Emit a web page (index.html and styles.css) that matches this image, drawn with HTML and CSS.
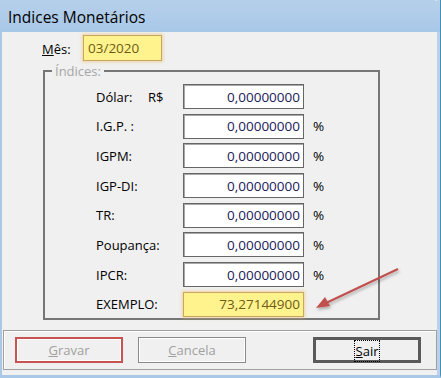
FILE: index.html
```html
<!DOCTYPE html>
<html lang="pt-BR">
<head>
  <meta charset="UTF-8">
  <title>Indices Monetários</title>
  <link rel="stylesheet" href="styles.css">
</head>
<body>

  <div class="window">
    <div class="titlebar">Indices Monetários</div>

    <div class="client">
      <div class="mes-row">
        <label class="mes-label"><u>M</u>ês:</label>
        <input class="field yellow mes" type="text" value="03/2020">
      </div>

      <fieldset class="group">
        <legend>Índices:</legend>

        <div class="row">
          <span class="lbl">Dólar:</span><span class="cur">R$</span>
          <input class="field num" type="text" value="0,00000000">
        </div>
        <div class="row">
          <span class="lbl wide">I.G.P. :</span>
          <input class="field num" type="text" value="0,00000000"><span class="pct">%</span>
        </div>
        <div class="row">
          <span class="lbl wide">IGPM:</span>
          <input class="field num" type="text" value="0,00000000"><span class="pct">%</span>
        </div>
        <div class="row">
          <span class="lbl wide">IGP-DI:</span>
          <input class="field num" type="text" value="0,00000000"><span class="pct">%</span>
        </div>
        <div class="row">
          <span class="lbl wide">TR:</span>
          <input class="field num" type="text" value="0,00000000"><span class="pct">%</span>
        </div>
        <div class="row">
          <span class="lbl wide">Poupança:</span>
          <input class="field num" type="text" value="0,00000000"><span class="pct">%</span>
        </div>
        <div class="row">
          <span class="lbl wide">IPCR:</span>
          <input class="field num" type="text" value="0,00000000"><span class="pct">%</span>
        </div>
        <div class="row">
          <span class="lbl wide">EXEMPLO:</span>
          <input class="field num yellow" type="text" value="73,27144900">
        </div>
      </fieldset>

      <div class="buttons">
        <button class="btn gravar" type="button"><u>G</u>ravar</button>
        <button class="btn cancela" type="button"><u>C</u>ancela</button>
        <button class="btn sair" type="button"><span class="focus"><u>S</u>air</span></button>
      </div>
    </div>

    <!-- seta vermelha de destaque -->
    <svg class="arrow" width="441" height="378" viewBox="0 0 441 378">
      <defs>
        <filter id="sh" x="-20%" y="-20%" width="140%" height="140%">
          <feDropShadow dx="1" dy="2" stdDeviation="1.5" flood-color="#000" flood-opacity="0.3"/>
        </filter>
      </defs>
      <g filter="url(#sh)">
        <line x1="398" y1="269" x2="326" y2="303" stroke="#c0504d" stroke-width="2"/>
        <polygon points="316,308 325,297 330,306" fill="#c0504d"/>
      </g>
    </svg>
  </div>

</body>
</html>
```

FILE: styles.css
```css
body {
  margin: 0;
  font-family: "Open Sans", "Noto Sans", Arial, sans-serif;
  font-size: 13px;
  color: #000;
  background: #fff;
  overflow: hidden;
}

.window {
  position: relative;
  width: 441px;
  height: 378px;
  box-sizing: border-box;
  background: #f0f0f0;
  border-left: 2px solid #a9c7e6;
  border-right: 1px solid #3f8fb8;
  border-bottom: 3px solid #a9c7e6;
  box-shadow: inset -3px 0 0 #b8d2ec;
}

.titlebar {
  height: 32px;
  margin-left: -2px;
  padding-left: 8px;
  line-height: 34px;
  font-size: 15.5px;
  color: #000;
  background: linear-gradient(#b6d0ea, #a8c8e8);
  border-top-right-radius: 6px;
}

.client {
  padding-top: 3px;
  padding-right: 3px;
}

.mes-row {
  display: flex;
  align-items: center;
  height: 26px;
}

.mes-label {
  margin-left: 40px;
  width: 41px;
  font-size: 13px;
  padding-top: 2px;
}

.field {
  box-sizing: border-box;
  height: 25px;
  margin: 0;
  padding: 0 4px;
  font-family: inherit;
  font-size: 13.5px;
  color: #20205a;
  background: #fff;
  border: 1px solid #666;
  box-shadow: inset 1px 1px 0 #a8a8a8;
  outline: none;
}

.field.yellow {
  background: #fff38e;
  color: #6e5c14;
  border: 1px solid #c9a760;
  box-shadow: 0 0 3px 1px rgba(240, 190, 110, 0.6);
}

.mes {
  width: 79px;
  height: 26px;
}

.group {
  box-sizing: border-box;
  width: 337px;
  margin: 3px 0 0 41px;
  padding: 6px 0 1px 51px;
  border: 2px solid #767676;
  min-width: 0;
}

.group legend {
  margin-left: -44px;
  padding: 0 3px;
  line-height: 14px;
  font-size: 13px;
  color: #a6a6a6;
}

.row {
  display: grid;
  grid-template-columns: 52px 35px 121px auto;
  align-items: center;
  height: 25px;
  margin-bottom: 4.7px;
  font-size: 13px;
}

.row:last-child {
  margin-bottom: 0;
}

.lbl.wide {
  grid-column: 1 / 3;
}

.num {
  width: 121px;
  text-align: right;
  padding-right: 3px;
}

.pct {
  margin-left: 9px;
  font-size: 13.5px;
}

.buttons {
  box-sizing: border-box;
  display: flex;
  align-items: center;
  height: 40px;
  margin: 10px 0 0 1px;
  padding-left: 11px;
  border: 1px solid #a0a0a0;
  box-shadow: inset 1px 1px 0 #fff;
}

.btn {
  box-sizing: border-box;
  width: 108px;
  height: 26px;
  margin: 0;
  font-family: inherit;
  font-size: 13px;
  background: #f0f0f0;
  color: #a0a0a0;
  border: 1px solid #8a8a8a;
  box-shadow: inset 0 0 0 1px #fff;
  padding: 0;
}

.gravar {
  border: 2px solid #c75353;
}

.cancela {
  margin-left: 15px;
}

.sair {
  margin-left: 67px;
  color: #000;
  border: 3px solid #5a5a5a;
  box-shadow: none;
}

.sair .focus {
  display: inline-block;
  padding: 2px 1px;
  border: 1px dotted #000;
  line-height: 16px;
}

.arrow {
  position: absolute;
  left: -2px;
  top: 0;
  pointer-events: none;
}
```
